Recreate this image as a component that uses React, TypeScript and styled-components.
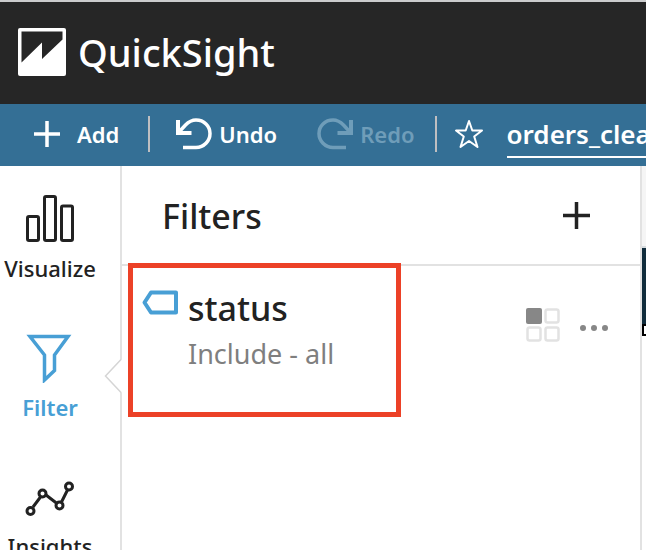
import React from "react";
import styled, { createGlobalStyle } from "styled-components";

const GlobalStyle = createGlobalStyle`
  * { box-sizing: border-box; }
  html, body, #root { height: 100%; }
  body {
    margin: 0;
    overflow: hidden;
    background: #fff;
    color: #222;
    font-family: "Noto Sans", "Open Sans", sans-serif;
  }
  button { font: inherit; color: inherit; background: none; border: 0; padding: 0; cursor: pointer; }
  svg { display: block; flex: none; }
`;

const Page = styled.div`
  display: flex;
  flex-direction: column;
  height: 100vh;
`;

const Header = styled.header`
  display: flex;
  flex: none;
  align-items: center;
  gap: 12px;
  height: 104px;
  padding: 0 0 2px 18px;
  border-top: 2px solid #cbcccd;
  background: #262626;
  color: #fff;
`;

const Brand = styled.span`
  font-size: 38px;
  line-height: 48px;
  font-weight: 500;
`;

const Toolbar = styled.div`
  display: flex;
  flex: none;
  align-items: center;
  height: 62px;
  padding: 0 0 2px 34px;
  overflow: hidden;
  background: #346f95;
  color: #fff;
`;

const Tool = styled.button<{ $gap: number }>`
  display: flex;
  flex: none;
  align-items: center;
  gap: ${(p) => p.$gap}px;
  font-size: 22px;
  line-height: 32px;
  font-weight: 600;
  &:disabled { color: #6f9db9; cursor: default; }
  & + & { margin-left: 40px; }
`;

const Divider = styled.span<{ $before: number; $after: number }>`
  flex: none;
  width: 2px;
  height: 36px;
  margin: 0 ${(p) => p.$after}px 0 ${(p) => p.$before}px;
  background: #bfbfc1;
`;

const AnalysisName = styled.input`
  flex: 1 0 160px;
  height: 44px;
  margin: 4px 0 0 23px;
  padding: 0 0 2px;
  border: 0;
  border-bottom: 2px solid #fff;
  border-radius: 0;
  outline: 0;
  background: none;
  color: #fff;
  font: 600 26px/36px "Noto Sans", sans-serif;
`;

const Workspace = styled.div`
  display: flex;
  flex: 1;
  min-height: 0;
`;

const Nav = styled.nav`
  display: flex;
  flex: 0 0 122px;
  flex-direction: column;
  gap: 49px;
  padding: 28px 20px 0 0;
  overflow: hidden;
  border-right: 2px solid #e2e2e2;
`;

const NavItem = styled.button<{ $active?: boolean }>`
  display: flex;
  flex: none;
  flex-direction: column;
  align-items: center;
  gap: 8px;
  color: ${(p) => (p.$active ? "#489fd5" : "#222")};
  font-size: 22px;
  line-height: 32px;
  font-weight: ${(p) => (p.$active ? 600 : 500)};
`;

const Panel = styled.section`
  position: relative;
  flex: 1;
  min-width: 0;
`;

const Pointer = styled.svg`
  position: absolute;
  top: 192px;
  left: -18px;
`;

const PanelHeader = styled.div`
  display: flex;
  align-items: center;
  justify-content: space-between;
  height: 100px;
  padding: 0 50px 0 40px;
  border-bottom: 2px solid #e2e2e2;
`;

const PanelTitle = styled.h2`
  margin: 2px 0 0;
  font-size: 34px;
  line-height: 44px;
  font-weight: 500;
`;

const FilterRow = styled.div`
  position: relative;
  display: flex;
  align-items: flex-start;
  padding: 20px 32px 0 20px;
`;

const FilterText = styled.div`
  flex: 1;
  padding-left: 10px;
`;

const FilterName = styled.div`
  font-size: 34px;
  line-height: 44px;
  font-weight: 500;
`;

const FilterSummary = styled.div`
  color: #7f7f7f;
  font-size: 27px;
  line-height: 48px;
`;

const RowActions = styled.div`
  display: flex;
  align-items: center;
  gap: 20px;
  padding-top: 22px;
`;

const MoreButton = styled.button`
  && { padding-top: 6px; }
`;

const Highlight = styled.div`
  position: absolute;
  top: -3px;
  left: 6px;
  width: 273px;
  height: 154px;
  border: 5px solid #ec4127;
  pointer-events: none;
`;

const Sheet = styled.div`
  display: flex;
  flex: 0 0 6px;
  flex-direction: column;
  overflow: hidden;
  border-left: 2px solid #e2e2e2;
`;

const SheetTop = styled.div`
  flex: 0 0 82px;
  border-bottom: 2px solid #d5dadd;
  background: #f5f5f5;
`;

const SheetBanner = styled.div`
  flex: 0 0 76px;
  background: #102c3c;
`;

const SheetHandle = styled.div`
  flex: none;
  width: 12px;
  height: 12px;
  border: 2px solid #000;
  background: #fff;
`;

const Plus = ({ size, width }: { size: number; width: number }) => (
  <svg width={size} height={size} viewBox={`0 0 ${size} ${size}`} stroke="currentColor" strokeWidth={width} aria-hidden="true">
    <path d={`M0 ${size / 2}H${size}M${size / 2} 0V${size}`} />
  </svg>
);

const Arrow = ({ flip }: { flip?: boolean }) => (
  <svg width="36" height="32" viewBox="0 0 36 32" fill="none" stroke="currentColor" strokeWidth="4" aria-hidden="true">
    <g transform={flip ? "matrix(-1 0 0 1 36 0)" : undefined}>
      <path d="M2 2V15H15.500" />
      <path d="M3 14L9.500 7C13 3.500 16 2 20 2C28 2 34 8 34 15.500C34 23 28 29.500 20 29.500H7" strokeWidth="3.500" />
    </g>
  </svg>
);

export default function App() {
  return (
    <>
      <GlobalStyle />
      <Page>
        <Header>
          <svg width="48" height="48" viewBox="0 0 48 48" aria-hidden="true">
            <rect width="48" height="48" rx="2" fill="#fff" />
            <path d="M3.500 3.500H44.500V11.500L24 31V14.500L3.500 34.500Z" fill="#262626" />
          </svg>
          <Brand>QuickSight</Brand>
        </Header>
        <Toolbar>
          <Tool $gap={17}><Plus size={26} width={3.5} />Add</Tool>
          <Divider $before={29} $after={26} />
          <Tool $gap={7}><Arrow />Undo</Tool>
          <Tool $gap={7} disabled><Arrow flip />Redo</Tool>
          <Divider $before={20} $after={17} />
          <Tool $gap={0} aria-label="Favorite">
            <svg width="30" height="30" viewBox="0 0 30 30" fill="none" stroke="currentColor" strokeWidth="2" strokeLinejoin="round" aria-hidden="true">
              <path d="M15 2L18.300 11.500H28L20.200 17.500L23.500 28L15 22L6.500 28L9.800 17.500L2 11.500H11.700Z" />
            </svg>
          </Tool>
          <AnalysisName aria-label="Analysis name" defaultValue="orders_clean" />
        </Toolbar>
        <Workspace>
          <Nav>
            <NavItem>
              <svg width="50" height="50" viewBox="0 0 50 50" fill="none" stroke="currentColor" strokeWidth="3" aria-hidden="true">
                <rect x="2.500" y="22.500" width="11" height="24" rx="1.500" />
                <rect x="19.500" y="2.500" width="11" height="44" rx="1.500" />
                <rect x="36.500" y="12" width="11" height="34.500" rx="1.500" />
              </svg>
              Visualize
            </NavItem>
            <NavItem $active>
              <svg width="50" height="50" viewBox="0 4 50 50" fill="none" stroke="currentColor" strokeWidth="3.500" aria-hidden="true">
                <path d="M5 7.500H43L29.500 26V41.500L19.500 51V26Z" />
              </svg>
              Filter
            </NavItem>
            <NavItem>
              <svg width="50" height="50" viewBox="0 -8 50 50" fill="none" stroke="currentColor" strokeWidth="3" aria-hidden="true">
                <path d="M8 27L15.500 17M21 15L32 23.500M36.500 22L42.500 10" />
                <circle cx="5.500" cy="31" r="3.500" /><circle cx="17.500" cy="13.500" r="3.500" />
                <circle cx="34.500" cy="25.500" r="3.500" /><circle cx="44" cy="6.500" r="3.500" />
              </svg>
              Insights
            </NavItem>
          </Nav>
          <Panel>
            <Pointer width="19" height="36" viewBox="0 0 19 36" fill="#fff" aria-hidden="true">
              <path d="M19 1L17 2L1.500 18L17 34L19 35Z" />
              <path d="M17 1.500L1.500 18L17 34.500" stroke="#d5d5d5" strokeWidth="1.500" />
            </Pointer>
            <PanelHeader>
              <PanelTitle>Filters</PanelTitle>
              <button aria-label="Add filter"><Plus size={27} width={3.5} /></button>
            </PanelHeader>
            <FilterRow>
              <svg width="36" height="34" viewBox="0 0 36 34" fill="none" stroke="#489fd5" strokeWidth="4" strokeLinejoin="round" aria-hidden="true">
                <path d="M9 6.500H34V26.500H9L2.500 16.500Z" />
              </svg>
              <FilterText>
                <FilterName>status</FilterName>
                <FilterSummary>Include - all</FilterSummary>
              </FilterText>
              <RowActions>
                <button aria-label="Filter scope">
                  <svg width="34" height="34" viewBox="0 0 34 34" fill="none" stroke="#e2e2e2" strokeWidth="2.500" aria-hidden="true">
                    <rect width="16" height="16" rx="2" fill="#878787" stroke="none" />
                    <rect x="19.500" y="1.500" width="13" height="13" rx="2" />
                    <rect x="1.500" y="19.500" width="13" height="13" rx="2" />
                    <rect x="19.500" y="19.500" width="13" height="13" rx="2" />
                  </svg>
                </button>
                <MoreButton aria-label="More options">
                  <svg width="28" height="6" viewBox="0 0 28 6" fill="#878787" aria-hidden="true">
                    <circle cx="3" cy="3" r="3" /><circle cx="14" cy="3" r="3" /><circle cx="25" cy="3" r="3" />
                  </svg>
                </MoreButton>
              </RowActions>
              <Highlight />
            </FilterRow>
          </Panel>
          <Sheet><SheetTop /><SheetBanner /><SheetHandle /></Sheet>
        </Workspace>
      </Page>
    </>
  );
}
